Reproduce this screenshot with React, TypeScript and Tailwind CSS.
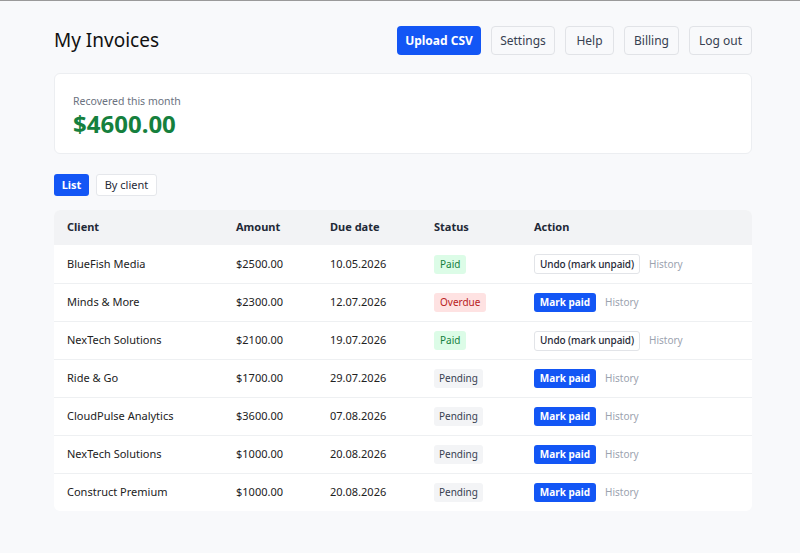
import React from "react";

type Row = { client: string; amount: string; due: string; status: "Paid" | "Overdue" | "Pending" };

const rows: Row[] = [
  { client: "BlueFish Media", amount: "$2500.00", due: "10.05.2026", status: "Paid" },
  { client: "Minds & More", amount: "$2300.00", due: "12.07.2026", status: "Overdue" },
  { client: "NexTech Solutions", amount: "$2100.00", due: "19.07.2026", status: "Paid" },
  { client: "Ride & Go", amount: "$1700.00", due: "29.07.2026", status: "Pending" },
  { client: "CloudPulse Analytics", amount: "$3600.00", due: "07.08.2026", status: "Pending" },
  { client: "NexTech Solutions", amount: "$1000.00", due: "20.08.2026", status: "Pending" },
  { client: "Construct Premium", amount: "$1000.00", due: "20.08.2026", status: "Pending" },
];

function Badge({ status }: { status: Row["status"] }) {
  if (status === "Paid")
    return <span className="inline-block rounded-[3px] bg-[#dcfce7] px-[6px] py-[2px] text-[10px] leading-[15px] text-[#15803d]">Paid</span>;
  if (status === "Overdue")
    return <span className="inline-block rounded-[3px] bg-[#fee2e2] px-[6px] py-[2px] text-[10px] leading-[15px] text-[#b91c1c]">Overdue</span>;
  return <span className="inline-block rounded-[3px] bg-[#f3f4f6] px-[5px] py-[2px] text-[10px] leading-[15px] text-[#374151]">Pending</span>;
}

export default function App() {
  return (
    <div
      className="min-h-[553px] border-t border-[#9a9a9a] bg-[#f8f9fb] text-[#111827]"
      style={{ fontFamily: '"Noto Sans", "Open Sans", sans-serif' }}
    >
      <div className="ml-[54px] w-[698px] pt-[25px]">
        <div className="flex items-center justify-between">
          <h1 className="text-[19px] font-normal leading-none text-[#111]">My Invoices</h1>
          <div className="flex items-center gap-[10px]">
            <button className="h-[29px] w-[84px] rounded-[4px] bg-[#1356f5] text-[12px] font-bold text-white">Upload CSV</button>
            <button className="h-[29px] w-[64px] rounded-[4px] border border-[#e1e3e7] bg-[#f8f9fb] text-[12px] text-[#374151]">Settings</button>
            <button className="h-[29px] w-[49px] rounded-[4px] border border-[#e1e3e7] bg-[#f8f9fb] text-[12px] text-[#374151]">Help</button>
            <button className="h-[29px] w-[55px] rounded-[4px] border border-[#e1e3e7] bg-[#f8f9fb] text-[12px] text-[#374151]">Billing</button>
            <button className="h-[29px] w-[63px] rounded-[4px] border border-[#e1e3e7] bg-[#f8f9fb] text-[12px] text-[#374151]">Log out</button>
          </div>
        </div>

        <div className="mt-[18px] h-[81px] rounded-[6px] border border-[#eceef1] bg-white px-[18px] pt-[20px]">
          <div className="text-[10.5px] leading-[14px] text-[#6b7280]">Recovered this month</div>
          <div className="mt-[2px] text-[24px] font-bold leading-[28px] text-[#15803d]">$4600.00</div>
        </div>

        <div className="mt-[20px] flex gap-[7px]">
          <button className="h-[22px] w-[35px] rounded-[3px] bg-[#1356f5] text-[11px] font-bold text-white">List</button>
          <button className="h-[22px] w-[61px] rounded-[3px] border border-[#e5e7eb] bg-white text-[11px] text-[#1f2937]">By client</button>
        </div>

        <div className="mt-[14px] overflow-hidden rounded-[6px] bg-white">
          <div className="grid h-[35px] grid-cols-[169px_94px_104px_100px_1fr] items-center bg-[#f2f3f5] pl-[13px] text-[11px] font-bold text-[#1f2937]">
            <div>Client</div>
            <div>Amount</div>
            <div>Due date</div>
            <div>Status</div>
            <div>Action</div>
          </div>
          {rows.map((r, i) => (
            <div
              key={i}
              className={`grid h-[38px] grid-cols-[169px_94px_104px_100px_1fr] items-center pl-[13px] text-[11px] text-[#222] ${i > 0 ? "border-t border-[#eef0f2]" : ""}`}
            >
              <div>{r.client}</div>
              <div>{r.amount}</div>
              <div>{r.due}</div>
              <div><Badge status={r.status} /></div>
              <div className="flex items-center">
                {r.status === "Paid" ? (
                  <>
                    <button className="h-[20px] w-[106px] rounded-[3px] border border-[#e2e4e8] bg-white text-[10px] font-medium tracking-[-0.1px] text-[#1f2937]">Undo (mark unpaid)</button>
                    <span className="ml-[9px] text-[10px] text-[#9ca3af]">History</span>
                  </>
                ) : (
                  <>
                    <button className="h-[19px] w-[62px] rounded-[3px] bg-[#1356f5] text-[10px] font-bold text-white">Mark paid</button>
                    <span className="ml-[9px] text-[10px] text-[#9ca3af]">History</span>
                  </>
                )}
              </div>
            </div>
          ))}
        </div>
      </div>
    </div>
  );
}
